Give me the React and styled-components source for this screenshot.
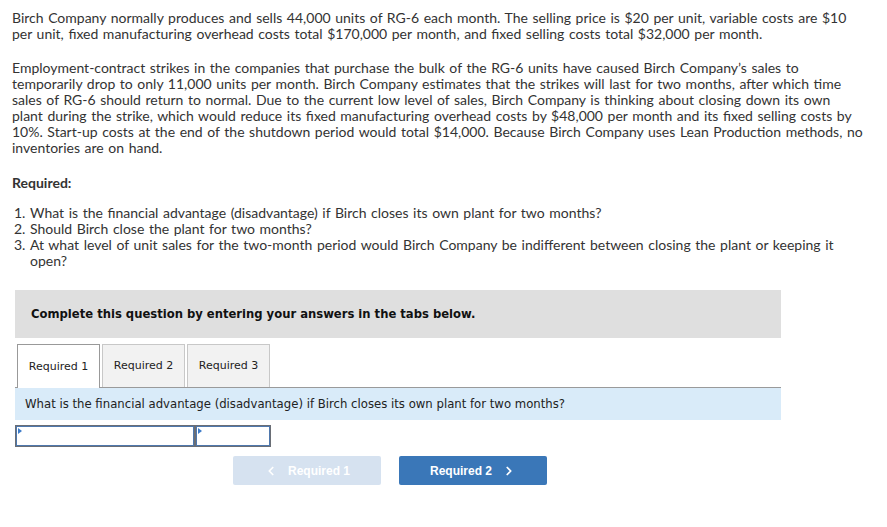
import React from 'react';
import styled, { createGlobalStyle } from 'styled-components';
import { ChevronLeft, ChevronRight } from 'lucide-react';

const GlobalStyle = createGlobalStyle`
  body {
    margin: 0;
    background: #fff;
  }
`;

const Page = styled.div`
  padding: 10px 12px;
  color: #333;
  font-family: 'Lato', 'Open Sans', sans-serif;
  font-size: 14px;
  word-spacing: 1px;
  line-height: 16px;
`;

const Prose = styled.div`
  max-width: 853px;
`;

const Paragraph = styled.p`
  margin: ${(p) => (p.first ? '0' : '18px 0 0')};
`;

const RequiredLabel = styled.div`
  margin-top: 19px;
  font-weight: bold;
`;

const QuestionList = styled.ol`
  margin: 14px 0 0;
  padding-left: 18px;
`;

const Notice = styled.div`
  margin: 21px 0 0 3px;
  width: 766px;
  height: 48px;
  background: #dfdfdf;
  display: flex;
  align-items: center;
  padding-left: 16px;
  box-sizing: border-box;
  font-family: 'DejaVu Sans', Verdana, sans-serif;
  font-weight: bold;
  font-size: 11.6px;
  word-spacing: 0;
  color: #111;
`;

const Tabs = styled.div`
  margin: 6px 0 0 3px;
  width: 766px;
  display: flex;
  gap: 2px;
  padding-left: 2px;
  box-sizing: border-box;
  border-bottom: 1px solid #9a9a9a;
`;

const Tab = styled.div`
  width: 83px;
  box-sizing: border-box;
  display: flex;
  align-items: center;
  justify-content: center;
  font-family: 'DejaVu Sans', Verdana, sans-serif;
  font-size: 11px;
  word-spacing: 0;
  color: #222;
  background: ${(p) => (p.active ? '#fff' : '#f2f2f2')};
  border: 1px solid ${(p) => (p.active ? '#999' : '#c8c8c8')};
  border-bottom: none;
  margin-bottom: ${(p) => (p.active ? '-1px' : '0')};
  height: ${(p) => (p.active ? '44px' : '43px')};
`;

const QuestionBand = styled.div`
  margin-left: 3px;
  width: 766px;
  height: 32px;
  background: #d9ebf9;
  display: flex;
  align-items: center;
  padding-left: 10px;
  box-sizing: border-box;
  font-family: 'DejaVu Sans', Verdana, sans-serif;
  font-size: 11.7px;
  word-spacing: 0;
  color: #222;
`;

const InputRow = styled.div`
  margin: 5px 0 0 3px;
  display: flex;
`;

const AnswerCell = styled.div`
  position: relative;
  width: ${(p) => p.w}px;
  height: 22px;
  box-sizing: border-box;
  border: 1px solid #6a6e75;
  box-shadow: inset 0 0 0 1px #4f78ad;
  background: #fff;

  &::before {
    content: '';
    position: absolute;
    top: 2px;
    left: 2px;
    border-top: 3px solid transparent;
    border-bottom: 3px solid transparent;
    border-left: 4px solid #3d7cc9;
  }
`;

const Nav = styled.div`
  margin-top: 9px;
  padding-left: 221px;
  display: flex;
  gap: 18px;
`;

const NavButton = styled.div`
  width: 148px;
  height: 29px;
  border-radius: 2px;
  display: flex;
  align-items: center;
  justify-content: center;
  gap: 10px;
  font-family: 'Liberation Sans', Arial, sans-serif;
  font-weight: bold;
  font-size: 12px;
  word-spacing: 0;
  color: #fff;
  background: ${(p) => (p.disabled ? '#d6e2f0' : '#3a77b8')};
`;

export default function App() {
  return (
    <>
      <GlobalStyle />
      <Page>
        <Prose>
          <Paragraph first>
            Birch Company normally produces and sells 44,000 units of RG-6 each month. The selling price is $20 per unit, variable costs are $10 per unit, fixed manufacturing overhead costs total $170,000 per month, and fixed selling costs total $32,000 per month.
          </Paragraph>
          <Paragraph>
            Employment-contract strikes in the companies that purchase the bulk of the RG-6 units have caused Birch Company’s sales to temporarily drop to only 11,000 units per month. Birch Company estimates that the strikes will last for two months, after which time sales of RG-6 should return to normal. Due to the current low level of sales, Birch Company is thinking about closing down its own plant during the strike, which would reduce its fixed manufacturing overhead costs by $48,000 per month and its fixed selling costs by 10%. Start-up costs at the end of the shutdown period would total $14,000. Because Birch Company uses Lean Production methods, no inventories are on hand.
          </Paragraph>
          <RequiredLabel>Required:</RequiredLabel>
          <QuestionList>
            <li>What is the financial advantage (disadvantage) if Birch closes its own plant for two months?</li>
            <li>Should Birch close the plant for two months?</li>
            <li>At what level of unit sales for the two-month period would Birch Company be indifferent between closing the plant or keeping it open?</li>
          </QuestionList>
        </Prose>
        <Notice>Complete this question by entering your answers in the tabs below.</Notice>
        <Tabs>
          <Tab active>Required 1</Tab>
          <Tab>Required 2</Tab>
          <Tab>Required 3</Tab>
        </Tabs>
        <QuestionBand>What is the financial advantage (disadvantage) if Birch closes its own plant for two months?</QuestionBand>
        <InputRow>
          <AnswerCell w={180} />
          <AnswerCell w={76} />
        </InputRow>
        <Nav>
          <NavButton disabled>
            <ChevronLeft size={14} strokeWidth={3} />
            Required 1
          </NavButton>
          <NavButton>
            Required 2
            <ChevronRight size={14} strokeWidth={3} />
          </NavButton>
        </Nav>
      </Page>
    </>
  );
}
